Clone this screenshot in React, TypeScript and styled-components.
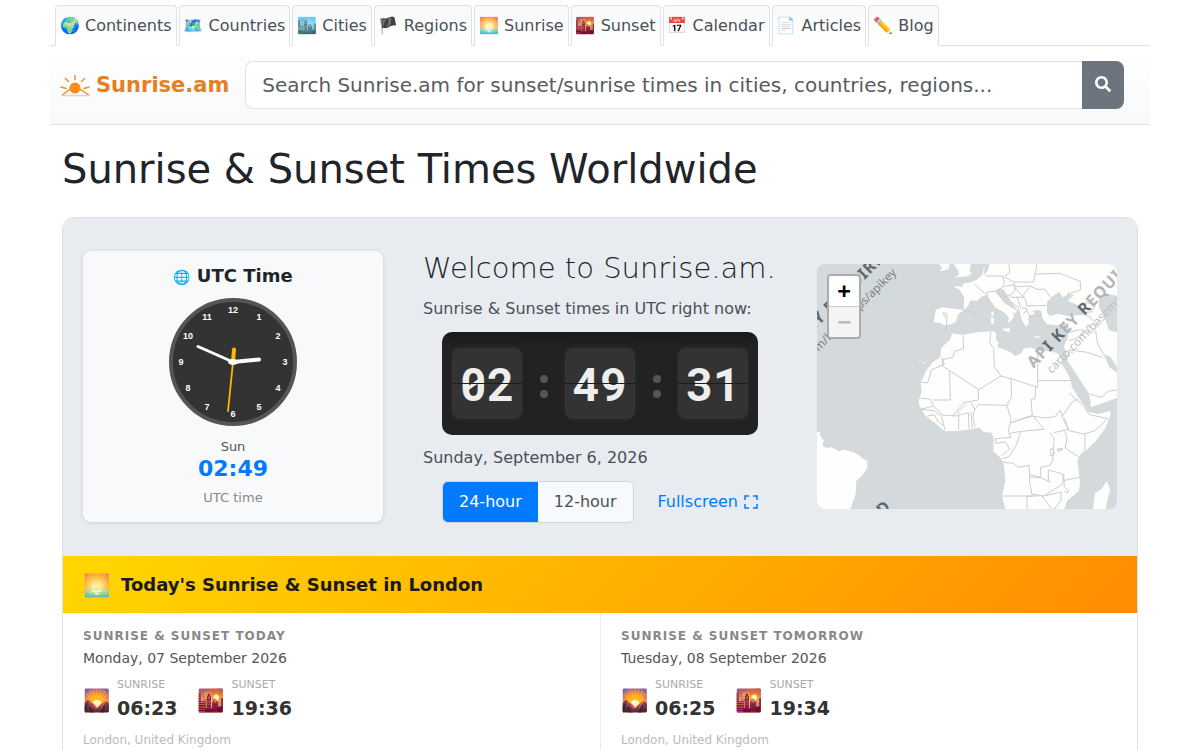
import React, { useState } from "react";
import styled, { createGlobalStyle } from "styled-components";
import { FaSearch } from "react-icons/fa";

const GlobalStyle = createGlobalStyle`
  *, *::before, *::after { box-sizing: border-box; }
  body {
    margin: 0;
    background: #fff;
    color: #212529;
    font: 16px/24px "DejaVu Sans", "Noto Color Emoji", sans-serif;
  }
  button, input { font: inherit; }
  h1, h2, h3, h4, p { margin: 0; }
`;

const Page = styled.div`
  max-width: 1100px;
  margin: 0 auto;
`;

const Tabs = styled.nav`
  display: flex;
  gap: 2px;
  padding: 5px 5px 0;
  border-bottom: 1px solid #dee2e6;
`;

const Tab = styled.a`
  padding: 8px 4px 7px;
  margin-bottom: -1px;
  border: 1px solid #dee2e6;
  border-bottom-color: #fff;
  border-radius: 4px 4px 0 0;
  background: linear-gradient(#f8f9fa, #fff);
  color: #495057;
  text-decoration: none;
  white-space: nowrap;
`;

const Header = styled.header`
  display: flex;
  align-items: center;
  gap: 16px;
  padding: 15px 26px 15px 10px;
  border-bottom: 1px solid #dee2e6;
  background: linear-gradient(#fff, #f8f9fa);
`;

const Brand = styled.a`
  display: flex;
  align-items: center;
  gap: 6px;
  color: #e67e22;
  font-size: 21px;
  font-weight: 700;
  text-decoration: none;
`;

const SearchForm = styled.form`
  display: flex;
  flex: 1;
  height: 48px;
`;

const SearchInput = styled.input`
  flex: 1;
  min-width: 0;
  padding: 0 16px;
  border: 1px solid #dee2e6;
  border-right: 0;
  border-radius: 8px 0 0 8px;
  background: #fff;
  font-size: 20px;
  &::placeholder { color: #595c5f; opacity: 1; }
`;

const SearchButton = styled.button`
  display: flex;
  align-items: center;
  justify-content: center;
  width: 42px;
  border: 0;
  border-radius: 0 8px 8px 0;
  background: #6c757d;
  color: #fff;
  padding: 0 0 2px;
`;

const Main = styled.main`
  padding: 20px 12px 0;
`;

const PageTitle = styled.h1`
  font-size: 40px;
  line-height: 48px;
  font-weight: 400;
`;

const Card = styled.section`
  margin-top: 24px;
  border: 1px solid #dee2e6;
  border-radius: 12px;
  overflow: hidden;
`;

const Hero = styled.div`
  display: grid;
  grid-template-columns: 300px minmax(0, 1fr) 300px;
  gap: 40px;
  align-items: center;
  padding: 32px 20px 33px;
  background: #e8ebef;
`;

const UtcCard = styled.div`
  display: flex;
  flex-direction: column;
  align-items: center;
  padding: 13px 16px 14px;
  border-radius: 8px;
  background: #f8f9fa;
  box-shadow: 0 1px 4px rgba(0, 0, 0, 0.12);
`;

const UtcTitle = styled.h3`
  display: flex;
  align-items: center;
  gap: 6px;
  margin-bottom: 10px;
  font-size: 18px;
  line-height: 24px;
`;

const GlobeIcon = styled.span`
  padding-top: 2px;
  font-size: 14px;
  line-height: 22px;
`;

const UtcText = styled.span<{ $muted?: boolean }>`
  font-size: 13px;
  line-height: 20px;
  margin-top: ${(p) => (p.$muted ? 7 : 11)}px;
  color: ${(p) => (p.$muted ? "#888" : "#555")};
`;

const UtcNow = styled.strong`
  color: #007bff;
  font-size: 22px;
  line-height: 24px;
`;

const Welcome = styled.div`
  display: flex;
  flex-direction: column;
  gap: 11px;
  color: #495057;
`;

const WelcomeTitle = styled.h2`
  font-size: 29px;
  line-height: 36px;
  font-weight: 200;
  white-space: nowrap;
  color: #212529;
`;

const FlipClock = styled.div`
  display: flex;
  align-self: center;
  align-items: center;
  justify-content: space-between;
  width: 316px;
  padding: 16px 10px;
  border-radius: 10px;
  background: linear-gradient(#1b1b1b, #222 16px);
`;

const Flap = styled.div`
  position: relative;
  width: 70px;
  border-radius: 8px;
  background: #333;
  box-shadow: 0 0 4px #2c2c2c;
  color: #eee;
  font: 700 46px/71px "Roboto Mono", "Liberation Mono", monospace;
  text-align: center;
  &::after {
    content: "";
    position: absolute;
    inset: 35px 0 auto;
    height: 1px;
    background: #1d1d1d;
  }
`;

const Colon = styled.div`
  display: grid;
  gap: 7px;
  padding-top: 5px;
  &::before, &::after {
    content: "";
    width: 8px;
    height: 8px;
    border-radius: 50%;
    background: #555;
  }
`;

const Controls = styled.div`
  display: flex;
  align-items: center;
  justify-content: space-between;
  width: 316px;
  align-self: center;
`;

const Segmented = styled.div`
  display: flex;
  border: 1px solid #ced4da;
  border-radius: 6px;
  overflow: hidden;
`;

const Segment = styled.button<{ $active: boolean }>`
  padding: 8px 16px;
  border: 0;
  background: ${(p) => (p.$active ? "#007bff" : "#f8f9fa")};
  color: ${(p) => (p.$active ? "#fff" : "#495057")};
`;

const FullscreenButton = styled.button`
  display: flex;
  align-items: center;
  gap: 6px;
  padding: 0;
  border: 0;
  background: none;
  color: #007bff;
`;

const MapBox = styled.div`
  position: relative;
  height: 245px;
  border-radius: 8px;
  overflow: hidden;
  background: #d4dadc;
  & > svg { display: block; width: 100%; height: 100%; }
`;

const ZoomControl = styled.div`
  position: absolute;
  top: 10px;
  left: 10px;
  border: 2px solid #a9adaf;
  border-radius: 4px;
  overflow: hidden;
`;

const ZoomButton = styled.button`
  display: block;
  width: 30px;
  height: 30px;
  padding: 0;
  border: 0;
  background: #fff;
  color: #000;
  font: 700 22px/30px "DejaVu Sans Mono", monospace;
  & + & { height: 31px; border-top: 1px solid #ccc; }
  &:disabled { background: #f4f4f4; color: #bbb; }
`;

const CityHeader = styled.div`
  display: flex;
  align-items: center;
  gap: 10px;
  padding: 16px 20px;
  background: linear-gradient(135deg, #ffd700, #ff8c00);
  color: #1a1a1a;
`;

const CityTitle = styled.h2`
  font-size: 18px;
  line-height: 25px;
`;

const Emoji = styled.span<{ $faded?: boolean }>`
  width: 28px;
  padding-top: 3px;
  font-size: 22px;
  line-height: 22px;
  opacity: ${(p) => (p.$faded ? 0.8 : 1)};
`;

const Days = styled.div`
  display: grid;
  grid-template-columns: 1fr 1fr;
`;

const Day = styled.article`
  padding: 14px 20px 20px;
  & + & { border-left: 1px solid #eee; }
`;

const DayTitle = styled.h4`
  color: #888;
  font-size: 12px;
  line-height: 18px;
  letter-spacing: 1px;
  text-transform: uppercase;
`;

const DayDate = styled.p`
  margin-top: 2px;
  color: #555;
  font-size: 14px;
  line-height: 22px;
`;

const Events = styled.div`
  display: flex;
  gap: 20px;
  margin-top: 7px;
`;

const Event = styled.div`
  display: flex;
  align-items: center;
  gap: 6px;
`;

const EventLabel = styled.div`
  color: #aaa;
  font-size: 11px;
  line-height: 18px;
`;

const EventTime = styled.div`
  color: #333;
  font-size: 19px;
  line-height: 28px;
  font-weight: 700;
`;

const Place = styled.p`
  margin-top: 8px;
  color: #bbb;
  font-size: 12px;
  line-height: 20px;
`;

const tabs = [
  ["🌍", "Continents"],
  ["🗺️", "Countries"],
  ["🏙️", "Cities"],
  ["🏴", "Regions"],
  ["🌅", "Sunrise"],
  ["🌇", "Sunset"],
  ["📅", "Calendar"],
  ["📄", "Articles"],
  ["✏️", "Blog"],
];

const days = [
  { title: "Sunrise & Sunset Today", date: "Monday, 07 September 2026", rise: "06:23", set: "19:36" },
  { title: "Sunrise & Sunset Tomorrow", date: "Tuesday, 08 September 2026", rise: "06:25", set: "19:34" },
];

function Logo() {
  return (
    <svg width="30" height="24" viewBox="0 0 30 24" aria-hidden="true">
      <path d="M1 22.500h29" stroke="#dcd6d2" strokeWidth="1.500" />
      <g stroke="#f0902a" strokeWidth="1.500" strokeLinecap="round" fill="none">
        <path d="M15 2.500v4M5.500 5.500l3 3M24.500 5.500l-3 3M1 14l5 1.500M29 14l-5 1.500M10 16l-7 5.500M20 16l8 5.500" />
      </g>
      <circle cx="15" cy="15" r="5.500" fill="#ff8c1a" />
    </svg>
  );
}

function AnalogClock() {
  return (
    <svg width="128" height="128" viewBox="-64 -64 128 128" role="img" aria-label="Analog clock">
      <circle r="62" fill="#333" stroke="#555" strokeWidth="4" />
      <g fill="#fff" fontFamily="Liberation Sans, sans-serif" fontSize="9" fontWeight="700" textAnchor="middle">
        {Array.from({ length: 12 }, (_, i) => {
          const a = ((i + 1) * Math.PI) / 6;
          return (
            <text key={i} x={52 * Math.sin(a)} y={3 - 52 * Math.cos(a)}>
              {i + 1}
            </text>
          );
        })}
      </g>
      <g strokeLinecap="round">
        <path d="M0 0 26-2.500" stroke="#fff" strokeWidth="4" />
        <path d="M0 0-35-15.500" stroke="#fff" strokeWidth="3" />
        <path d="M0 0 1-12.500" stroke="#ffb800" strokeWidth="4" />
        <path d="M0 0-5 49" stroke="#ffb800" strokeWidth="1.800" />
      </g>
      <ellipse rx="5" ry="3" fill="#fff" />
    </svg>
  );
}

function WorldMap() {
  return (
    <svg viewBox="0 0 900 735" preserveAspectRatio="xMidYMid slice" role="img" aria-label="Map of Europe and Africa">
      <g fill="#fefefc">
        <path d="M0 505l8-2 2 12 10 15-4 14 12 9 14-4 13 7 10 6 16-5 25 6 18 9 14 12 13 8v20l-15 22-18 16-2 40-16 45H0z" />
        <path d="M405 208l33 5 42-8 50-3 8 6-2 16 10 14-6 10 22 9 18 7 14 12 20-8 6-14 20-4 32 12h28l20 6 14 10-1 18 26 46 6 28 18 28 10 16 14 18 10 13 28 5 35-10 1 12-18 44-27 36-38 36-17 20 4 32 4 38-3 22-36 30-8 25H565l-10-38 10-47-4-48-10-20-22-20 1-40-6-16-24-2-12-13-28 5-36 5-40 1-24-20-36-28-18-32v-14l8-26-3-25 18-40 20-24 20-12 4-30 26-24z" />
        <path d="M376 130l64 8 2-38-16-24-14-6 6-5 18 5 4-12 18-2 24-10 14-14 4-18 8-14h392v402l-78 28-5-40-38-58-28-42-3-28-8-14 10-20 6-28-2-24-34 8-30-3-14-20-3-20-8-4-20 4 10 8-18 5-4 12 3 10-8 12-14-20-6-20-12-16-18-26-18-30-18-2-4 14 25 30 36 22-2 8-8-3 2 13-9 12-10 8 4-15-12-16-30-18-16-22-10-14-16 6-12 12-20-2-6 16-10 10-20 16-8 22-14 8-20 3-12-6-20-4 6-36z" />
        <path d="M412 42l14-10-2-12-14-20h52l-4 22 8 6-12 8-22 2zM366 0h32l-4 16-26 6 8-10zM524 142l6 3-1 12-6-4zM522 160l10 2-2 18-8-2zM556 194l24-1-4 12-18-6zM652 216l18 2-4 4-14-2zM720 218l14-3-8 10zM870 650l10 30-7 20-7 35h-38l6-48 20-12z" />
        <circle cx="308" cy="293" r="2" /><circle cx="320" cy="296" r="3" /><circle cx="331" cy="292" r="2" />
      </g>
      <g fill="#d4dadc">
        <path d="M690 115l16-18 20-13 12 16 16-10 18 2-20 18 42 18 8 24-50 4-30-7-24 8-8-12zM846 98l20-8 34 5v110l-24-6-12-35-18-34zM860 270l20 8 20 30v18l-24-18zM720 553l20-2-6 10-14 3zM500 30l4-30h14l-6 20-10 12z" />
      </g>
      <g fill="none" stroke="#cfcbcb" strokeWidth="3" strokeLinejoin="round">
        <path d="M438 215l2 38-28 10-4 16-30 8 4 14-38 16-12 40-20-2M376 280v26l22 14 86 56v32l-44 8-34 42M398 320l2 88h-52M484 378l68-42-20-28-2-54-12-18 4-32M552 336l30 8 80 26V250M664 350h98M582 344l2 54-14 26-86-2-10 14-12-20M656 368l-2 36-12 2 4 50-40 12-24 8M570 426l12 38-8 42 8 14-48 4M582 476l64-22 36 42-70 6-34 6M646 456l36 6 32-4 16-20 6 22 18 36-44 10M736 456l30-42 14-8 34 38M742 462l14 38 44 10 34-10 38-36-54-12-12-16M804 510v48l-20 24M744 502l6 22-6 28M744 552l40 26M700 506l12 18-4 28v30l-8 22-30 6 2 30-32-8M612 502l-14 40-22 36-20 6M534 524l4 14 28-4 12 22-24 18M556 594l34 4 12 12 34-6 2 34 36 4 28 14M638 638v18l8 40h-90M646 690l34 6 48-30 16-16M630 735v-38l44-2 30 40M680 696l52-12v26l-20 25M694 618l44 12v20l50-10M694 618v36M740 630l2 38 12 10-2 10-10-6M710 554l2 18-12 4v-20z" />
        <path d="M312 402l28 4 10 20-40 10M312 436l38 4 24 16 4 18 6 24M350 426l28 28 10 0 34 2 4-14 22-22M425 498v-44l30-8M454 446l2 48M462 446l4 46M472 436l-4 24 6 28M332 456l20-4 10 20 18 14M384 160l-6-14 12 4-3 50-9 2M440 138l38 10M505 90l-16-14-16-16M520 112l-10-14 0-14 24-2 20-10 8-12-4-24-52 0M534 82l30 16 16-4 14-14-4-18-28 6M562 38l28 16 60 0 10-54M590 54l6 14 44-2 20 10 24 0 16 24M576 0l2 26-16 12M654 30l74-2 62 24 0 26-40 12M640 66l-22 28 10 20 0 12 60-2M580 100l40 0M580 112l24 18 6 30M600 96l10 34 18 4 10 24 36-4M618 150l14-14M594 70l22 28M755 205l36-8 40 8M800 150l20 10 24 30M780 146l44-2 12-20-32-10M836 200l6 40 20 35M752 258l54 6 50 16M756 230l28-10 16-20M748 290l10-30M820 390l32 10 22-18 26-4M758 386l20 24" />
      </g>
      <g fontFamily="Noto Sans, sans-serif">
        <g fontSize="48" fontWeight="700" letterSpacing="3">
          <text transform="translate(650 314) rotate(-46)" fill="#b3b6b8">
            AP<tspan fill="#62676b">I</tspan> <tspan fill="#62676b">K</tspan>EY <tspan fill="#62676b">R</tspan>EQUIRED
          </text>
          <text transform="translate(-40 230) rotate(-45)" fill="#62676b">KEY REQUIRED</text>
          <text transform="translate(198 756) rotate(-45)" fill="#62676b">D</text>
        </g>
        <g fontSize="35" fill="#7a8084">
          <text transform="translate(704 330) rotate(-46)" fill="#bcbfc1">carto.com/basemaps/apikey</text>
          <text transform="translate(240 28) rotate(-45)" textAnchor="end">carto.com/basemaps/apikey</text>
        </g>
      </g>
    </svg>
  );
}

export default function App() {
  const [hour24, setHour24] = useState(true);
  return (
    <>
      <GlobalStyle />
      <Page>
        <Tabs>
          {tabs.map(([icon, label]) => (
            <Tab key={label} href="#">{icon} {label}</Tab>
          ))}
        </Tabs>
        <Header>
          <Brand href="#"><Logo />Sunrise.am</Brand>
          <SearchForm role="search">
            <SearchInput
              aria-label="Search"
              placeholder="Search Sunrise.am for sunset/sunrise times in cities, countries, regions..."
            />
            <SearchButton type="button" aria-label="Search"><FaSearch size={16} /></SearchButton>
          </SearchForm>
        </Header>
        <Main>
          <PageTitle>Sunrise &amp; Sunset Times Worldwide</PageTitle>
          <Card>
            <Hero>
              <UtcCard>
                <UtcTitle><GlobeIcon>🌐</GlobeIcon>UTC Time</UtcTitle>
                <AnalogClock />
                <UtcText>Sun</UtcText>
                <UtcNow>02:49</UtcNow>
                <UtcText $muted>UTC time</UtcText>
              </UtcCard>
              <Welcome>
                <WelcomeTitle>Welcome to Sunrise.am.</WelcomeTitle>
                <p>Sunrise &amp; Sunset times in UTC right now:</p>
                <FlipClock>
                  <Flap>02</Flap><Colon /><Flap>49</Flap><Colon /><Flap>31</Flap>
                </FlipClock>
                <p>Sunday, September 6, 2026</p>
                <Controls>
                  <Segmented>
                    <Segment $active={hour24} onClick={() => setHour24(true)}>24-hour</Segment>
                    <Segment $active={!hour24} onClick={() => setHour24(false)}>12-hour</Segment>
                  </Segmented>
                  <FullscreenButton>
                    Fullscreen
                    <svg width="14" height="14" viewBox="0 0 14 14" fill="none" stroke="currentColor" strokeWidth="1.500" aria-hidden="true">
                      <path d="M1 5V1h4M9 1h4v4M13 9v4H9M5 13H1V9" />
                    </svg>
                  </FullscreenButton>
                </Controls>
              </Welcome>
              <MapBox>
                <WorldMap />
                <ZoomControl>
                  <ZoomButton aria-label="Zoom in">+</ZoomButton>
                  <ZoomButton aria-label="Zoom out" disabled>−</ZoomButton>
                </ZoomControl>
              </MapBox>
            </Hero>
            <CityHeader>
              <Emoji $faded>🌅</Emoji>
              <CityTitle>Today's Sunrise &amp; Sunset in London</CityTitle>
            </CityHeader>
            <Days>
              {days.map((d) => (
                <Day key={d.title}>
                  <DayTitle>{d.title}</DayTitle>
                  <DayDate>{d.date}</DayDate>
                  <Events>
                    <Event>
                      <Emoji>🌄</Emoji>
                      <div><EventLabel>SUNRISE</EventLabel><EventTime>{d.rise}</EventTime></div>
                    </Event>
                    <Event>
                      <Emoji>🌇</Emoji>
                      <div><EventLabel>SUNSET</EventLabel><EventTime>{d.set}</EventTime></div>
                    </Event>
                  </Events>
                  <Place>London, United Kingdom</Place>
                </Day>
              ))}
            </Days>
          </Card>
        </Main>
      </Page>
    </>
  );
}
